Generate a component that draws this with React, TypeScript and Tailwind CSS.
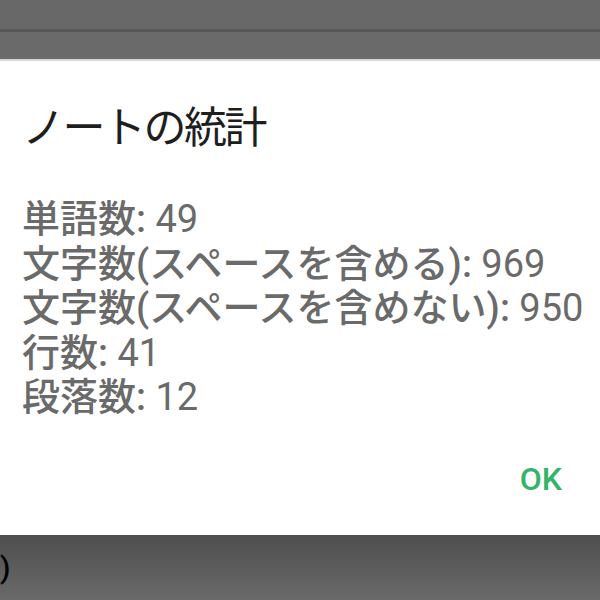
const STATS = [
  { label: "単語数", value: "49" },
  { label: "文字数(スペースを含める)", value: "969" },
  { label: "文字数(スペースを含めない)", value: "950" },
  { label: "行数", value: "41" },
  { label: "段落数", value: "12" },
];

export default function App() {
  return (
    <div className="flex h-[600px] w-[600px] flex-col overflow-hidden bg-[#666] font-['Roboto','Noto_Sans_CJK_JP',sans-serif]">
      {/* dimmed toolbar behind the dialog */}
      <div className="flex h-[61px] flex-col">
        <div className="h-[29px] bg-[#686868]" />
        <div className="h-[3px] bg-[#575757]" />
        <div className="flex-1 bg-[#6a6a6a]" />
        <div className="h-[2px] bg-[#d8d8d8]" />
      </div>

      <div className="flex flex-1 flex-col bg-white px-[22px]">
        <h1 className="mt-[37px] text-[43px] leading-[52px] tracking-[-2.5px] text-[#1e1e1e] font-['Noto_Sans_CJK_JP',sans-serif]">
          ノートの統計
        </h1>
        <div className="mt-[47px] flex flex-col text-[38px] leading-[44.5px] text-[#6a6a6a]">
          {STATS.map((s) => (
            <div key={s.label} className="whitespace-nowrap">
              <span className="font-medium">{s.label}</span>
              <span className="font-medium">:</span> {s.value}
            </div>
          ))}
        </div>
        <div className="mt-auto mb-[40px] flex justify-end pr-[16px]">
          <button className="text-[32px] font-medium leading-[32px] text-[#35b36a]">OK</button>
        </div>
      </div>

      <div className="flex h-[65px] items-center bg-gradient-to-b from-[#4e4e4e] to-[#6a6a6a]">
        <span className="text-[30px] font-medium leading-none text-black">)</span>
      </div>
    </div>
  );
}
